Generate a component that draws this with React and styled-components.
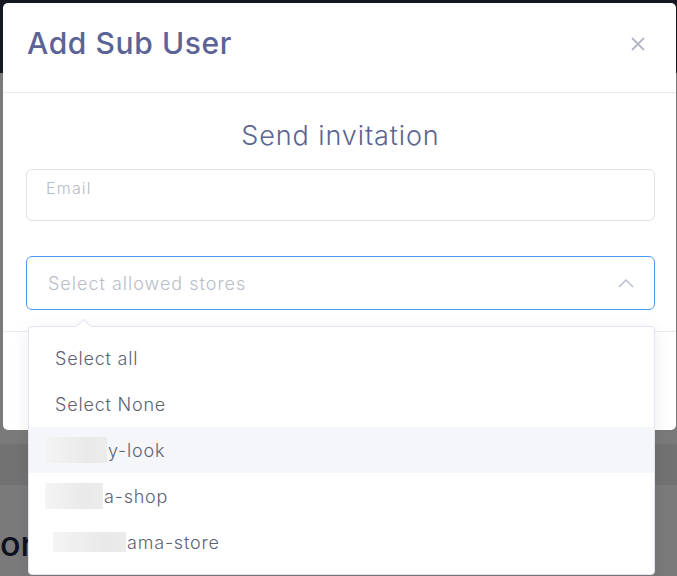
import React from 'react';
import styled, { createGlobalStyle } from 'styled-components';

const GlobalStyle = createGlobalStyle`
  html, body {
    margin: 0;
    padding: 0;
  }
  body {
    font-family: Inter, "Noto Sans", sans-serif;
    overflow: hidden;
  }
`;

const Screen = styled.div`
  position: relative;
  width: 677px;
  height: 576px;
  overflow: hidden;
  background: #f4f4f6;
`;

const Page = styled.div`
  display: flex;
  flex-direction: column;
  height: 100%;
`;

const TopBar = styled.div`
  height: 73px;
  background: #2b3140;
`;

const PageBody = styled.div`
  flex: 1;
  display: flex;
  flex-direction: column;
  padding-top: 371px;
`;

const Band = styled.div`
  height: 41px;
  background: #e4e4e6;
`;

const PageHeading = styled.div`
  margin-top: 38px;
  font-size: 34px;
  font-weight: 500;
  color: #1d2540;
`;

const Overlay = styled.div`
  position: absolute;
  inset: 0;
  background: rgba(0, 0, 0, 0.5);
`;

const Modal = styled.div`
  position: absolute;
  top: 3px;
  left: 3px;
  width: 673px;
  height: 427px;
  background: #fff;
  border-radius: 5px;
  display: flex;
  flex-direction: column;
`;

const ModalHeader = styled.div`
  height: 90px;
  display: flex;
  align-items: center;
  justify-content: space-between;
  padding: 0 28px 0 24px;
  border-bottom: 1px solid #e9e9ef;
  box-sizing: border-box;
`;

const Title = styled.h2`
  margin: 0 0 10px;
  font-size: 30px;
  font-weight: 500;
  color: #5b6397;
  letter-spacing: 0.6px;
`;

const CloseButton = styled.button`
  border: 0;
  background: none;
  padding: 0;
  width: 20px;
  height: 20px;
  margin-bottom: 8px;
  display: flex;
  align-items: center;
  justify-content: center;
  cursor: pointer;
`;

const ModalBody = styled.div`
  height: 239px;
  padding: 0 21px 0 23px;
  border-bottom: 1px solid #e9e9ef;
  display: flex;
  flex-direction: column;
  box-sizing: border-box;
`;

const Subtitle = styled.h3`
  margin: 26px 0 0;
  height: 33px;
  text-align: center;
  font-size: 27px;
  font-weight: 300;
  letter-spacing: 0.9px;
  color: #5b6590;
`;

const EmailField = styled.div`
  margin-top: 17px;
  height: 52px;
  border: 1px solid #e0e2ea;
  border-radius: 6px;
  padding: 8px 19px;
  box-sizing: border-box;
  font-size: 16px;
  font-weight: 300;
  letter-spacing: 1.2px;
  color: #b8bbc4;
`;

const SelectWrap = styled.div`
  position: relative;
  margin-top: 35px;
`;

const SelectBox = styled.div`
  height: 54px;
  border: 1px solid #4b9bf6;
  border-radius: 6px;
  padding: 0 20px 0 21px;
  box-sizing: border-box;
  display: flex;
  align-items: center;
  justify-content: space-between;
  font-size: 18px;
  font-weight: 300;
  letter-spacing: 1px;
  color: #b8bdca;
`;

const Dropdown = styled.ul`
  position: absolute;
  top: 70px;
  left: 2px;
  width: 627px;
  margin: 0;
  padding: 8px 0 9px;
  list-style: none;
  background: #fff;
  border: 1px solid #e3e4ee;
  border-radius: 4px;
  box-shadow: 0 4px 18px rgba(0, 0, 0, 0.08);
  box-sizing: border-box;
  z-index: 2;

  &::before {
    content: '';
    position: absolute;
    top: -6px;
    left: 49px;
    width: 10px;
    height: 10px;
    background: #fff;
    border-top: 1px solid #e3e4ee;
    border-left: 1px solid #e3e4ee;
    transform: rotate(45deg);
  }
`;

const Option = styled.li`
  height: 46px;
  display: flex;
  align-items: center;
  padding-left: ${p => p.$indent || 26}px;
  font-size: 18px;
  font-weight: 300;
  letter-spacing: 0.8px;
  color: #5d6274;
  background: ${p => (p.$active ? '#f5f6fa' : '#fff')};
`;

const Blur = styled.span`
  display: inline-block;
  width: ${p => p.$w}px;
  height: ${p => p.$h}px;
  margin-right: 1px;
  background: linear-gradient(90deg, #f4f4f4, #e9e9e9 70%, #ececec);
  filter: blur(0.6px);
`;

const stores = [
  { name: 'y-look', indent: 17, w: 61, h: 26, active: true },
  { name: 'a-shop', indent: 16, w: 58, h: 26 },
  { name: 'ama-store', indent: 24, w: 73, h: 20 },
];

const App = () => (
  <Screen>
    <GlobalStyle />
    <Page>
      <TopBar />
      <PageBody>
        <Band />
        <PageHeading>or</PageHeading>
      </PageBody>
    </Page>
    <Overlay />
    <Modal>
      <ModalHeader>
        <Title>Add Sub User</Title>
        <CloseButton aria-label="Close">
          <svg width="16" height="16" viewBox="0 0 16 16">
            <path
              d="M2 2 L14 14 M14 2 L2 14"
              stroke="#b4b8c6"
              strokeWidth="1.8"
              fill="none"
            />
          </svg>
        </CloseButton>
      </ModalHeader>
      <ModalBody>
        <Subtitle>Send invitation</Subtitle>
        <EmailField>Email</EmailField>
        <SelectWrap>
          <SelectBox>
            Select allowed stores
            <svg width="16" height="9" viewBox="0 0 16 9">
              <path
                d="M1 8 L8 1 L15 8"
                stroke="#b3bac8"
                strokeWidth="1.4"
                fill="none"
              />
            </svg>
          </SelectBox>
          <Dropdown>
            <Option>Select all</Option>
            <Option>Select None</Option>
            {stores.map(s => (
              <Option key={s.name} $indent={s.indent} $active={s.active}>
                <Blur $w={s.w} $h={s.h} />
                {s.name}
              </Option>
            ))}
          </Dropdown>
        </SelectWrap>
      </ModalBody>
    </Modal>
  </Screen>
);

export default App;
